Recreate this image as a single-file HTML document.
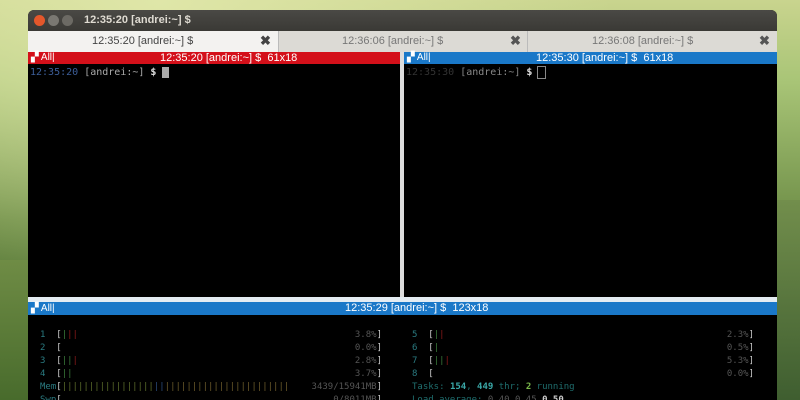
<!DOCTYPE html>
<html><head><style>
*{margin:0;padding:0;box-sizing:border-box}
body{width:800px;height:400px;overflow:hidden;position:relative;font-family:"Liberation Sans",sans-serif;
background:linear-gradient(180deg,#c9d48e 0%,#a9c577 20%,#6f8f48 55%,#3f5e2a 100%);}
.abs{position:absolute}
.mono{font-family:"DejaVu Sans Mono","Liberation Mono",monospace;font-size:10px;white-space:pre;line-height:13px}
.row{position:relative;height:13px;font-family:"DejaVu Sans Mono","Liberation Mono",monospace;font-size:9px;line-height:13px;white-space:pre;color:#ccc}
.row .r{position:absolute;right:0;top:0}
.g{color:#555}.c{color:#2a7a80}
</style></head><body>
<div class="abs" style="left:0;top:0;width:800px;height:400px;background:radial-gradient(ellipse at 20% 0%,#dfe6a8 0%,rgba(0,0,0,0) 50%)"></div>
<div class="abs" style="left:0;top:260px;width:30px;height:140px;background:linear-gradient(180deg,#6f8c45,#486b2c)"></div>
<div class="abs" style="left:776px;top:200px;width:24px;height:200px;background:linear-gradient(180deg,#728e4c,#3f5e30)"></div>
<div class="abs" style="left:28px;top:10px;width:749px;height:390px;background:#000;border-radius:6px 6px 0 0;overflow:hidden">
 <div class="abs" style="left:0;top:0;width:749px;height:21px;background:linear-gradient(#4a4945,#3a3935)"></div>
 <div class="abs" style="left:6px;top:5px;width:11px;height:11px;border-radius:50%;background:#e4572b"></div>
 <div class="abs" style="left:20px;top:5px;width:11px;height:11px;border-radius:50%;background:#7a7872"></div>
 <div class="abs" style="left:34px;top:5px;width:11px;height:11px;border-radius:50%;background:#6c6a64"></div>
 <div class="abs" style="left:56px;top:4px;color:#dfdbd2;font-size:11px;font-weight:bold">12:35:20 [andrei:~] $</div>
 <div class="abs" style="left:0;top:21px;width:749px;height:21px;background:#dcdad5"></div>
 <div class="abs" style="left:0;top:21px;width:250px;height:21px;background:#f3f2f0"></div>
 <div class="abs" style="left:64px;top:25px;color:#444;font-size:11px">12:35:20 [andrei:~] $</div>
 <div class="abs" style="left:232px;top:23px;color:#444;font-size:13px;font-weight:bold">✖</div>
 <div class="abs" style="left:250px;top:21px;width:1px;height:21px;background:#bbb"></div>
 <div class="abs" style="left:314px;top:25px;color:#777;font-size:11px">12:36:06 [andrei:~] $</div>
 <div class="abs" style="left:482px;top:23px;color:#555;font-size:13px;font-weight:bold">✖</div>
 <div class="abs" style="left:499px;top:21px;width:1px;height:21px;background:#bbb"></div>
 <div class="abs" style="left:564px;top:25px;color:#777;font-size:11px">12:36:08 [andrei:~] $</div>
 <div class="abs" style="left:731px;top:23px;color:#555;font-size:13px;font-weight:bold">✖</div>
 <div class="abs" style="left:0;top:42px;width:372px;height:12px;background:#d4101a"></div>
 <div class="abs" style="left:3px;top:42px;color:#fff;font-size:10px;line-height:12px">▞ All|</div>
 <div class="abs" style="left:132px;top:42px;color:#fff;font-size:11px;line-height:12px">12:35:20 [andrei:~] $&nbsp; 61x18</div>
 <div class="abs" style="left:372px;top:42px;width:4px;height:255px;background:#ddd"></div>
 <div class="abs" style="left:376px;top:42px;width:373px;height:12px;background:#1a78c8"></div>
 <div class="abs" style="left:379px;top:42px;color:#fff;font-size:10px;line-height:12px">▞ All|</div>
 <div class="abs" style="left:508px;top:42px;color:#fff;font-size:11px;line-height:12px">12:35:30 [andrei:~] $&nbsp; 61x18</div>
 <div class="abs mono" style="left:2px;top:56px;color:#aaa"><span style="color:#3d5f9a">12:35:20</span> [andrei:~] <b style="color:#ddd">$</b> <span style="background:#aaa"> </span></div>
 <div class="abs mono" style="left:378px;top:56px;color:#888"><span style="color:#333">12:35:30</span> [andrei:~] <b style="color:#ddd">$</b> <span style="outline:1px solid #888"> </span></div>
 <div class="abs" style="left:0;top:287px;width:749px;height:5px;background:#e4ecf2"></div>
 <div class="abs" style="left:0;top:292px;width:749px;height:13px;background:#1a78c8"></div>
 <div class="abs" style="left:3px;top:292px;color:#fff;font-size:10px;line-height:13px">▞ All|</div>
 <div class="abs" style="left:317px;top:292px;color:#fff;font-size:11px;line-height:13px">12:35:29 [andrei:~] $&nbsp; 123x18</div>
 <div class="abs" style="left:12px;top:319px;width:342px">
  <div class="row"><span class="c">1</span>  [<span style="color:#3a7a3a">|</span><span style="color:#8a1a1a">||</span><span class="r"><span class="g">3.8%</span>]</span></div>
  <div class="row"><span class="c">2</span>  [<span class="r"><span class="g">0.0%</span>]</span></div>
  <div class="row"><span class="c">3</span>  [<span style="color:#3a7a3a">||</span><span style="color:#8a1a1a">|</span><span class="r"><span class="g">2.8%</span>]</span></div>
  <div class="row"><span class="c">4</span>  [<span style="color:#3a7a3a">||</span><span class="r"><span class="g">3.7%</span>]</span></div>
  <div class="row"><span class="c">Mem</span>[<span style="color:#5a6a2a">|||||||||||||||||</span><span style="color:#2a4a7a">||</span><span style="color:#6a5a2a">|||||||||||||||||||||||</span><span class="r"><span class="g">3439/15941MB</span>]</span></div>
  <div class="row"><span class="c">Swp</span>[<span class="r"><span class="g">0/8011MB</span>]</span></div>
 </div>
 <div class="abs" style="left:384px;top:319px;width:342px">
  <div class="row"><span class="c">5</span>  [<span style="color:#3a7a3a">|</span><span style="color:#8a1a1a">|</span><span class="r"><span class="g">2.3%</span>]</span></div>
  <div class="row"><span class="c">6</span>  [<span style="color:#3a7a3a">|</span><span class="r"><span class="g">0.5%</span>]</span></div>
  <div class="row"><span class="c">7</span>  [<span style="color:#3a7a3a">||</span><span style="color:#8a1a1a">|</span><span class="r"><span class="g">5.3%</span>]</span></div>
  <div class="row"><span class="c">8</span>  [<span class="r"><span class="g">0.0%</span>]</span></div>
  <div class="row"><span style="color:#1f6e6e">Tasks: <b style="color:#3aa8a8">154</b>, <b style="color:#3aa8a8">449</b> thr; <b style="color:#7ab84a">2</b> running</span></div>
  <div class="row"><span style="color:#1f6e6e">Load average: <span class="g">0.40 0.45</span> <b style="color:#ccc">0.50</b></span></div>
 </div>
</div>
</body></html>
